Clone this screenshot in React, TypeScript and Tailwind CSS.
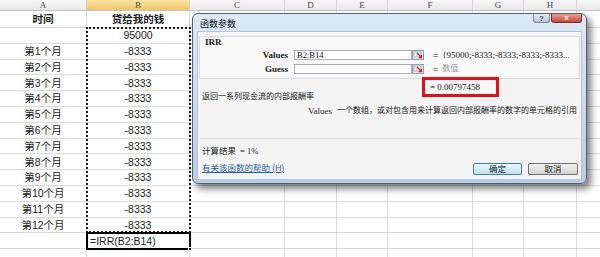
import React from "react";

const cols = [
  { l: "A", w: "w-[87px]", hd: "bg-gradient-to-b from-[#f7f7f7] to-[#e9e9e9]" },
  { l: "B", w: "w-[103px]", hd: "bg-gradient-to-b from-[#fbe3a3] to-[#f3c663]" },
  { l: "C", w: "w-[95px]", hd: "bg-gradient-to-b from-[#f7f7f7] to-[#e9e9e9]" },
  { l: "D", w: "w-[52px]", hd: "bg-gradient-to-b from-[#f7f7f7] to-[#e9e9e9]" },
  { l: "E", w: "w-[51px]", hd: "bg-gradient-to-b from-[#f7f7f7] to-[#e9e9e9]" },
  { l: "F", w: "w-[85px]", hd: "bg-gradient-to-b from-[#f7f7f7] to-[#e9e9e9]" },
  { l: "G", w: "w-[51px]", hd: "bg-gradient-to-b from-[#f7f7f7] to-[#e9e9e9]" },
  { l: "H", w: "w-[53px]", hd: "bg-gradient-to-b from-[#f7f7f7] to-[#e9e9e9]" },
  { l: "", w: "w-[60px]", hd: "bg-gradient-to-b from-[#f7f7f7] to-[#e9e9e9]" },
];

type Row = { a: string; b: string; kind?: "head" | "formula"; h: string };

const rows: Row[] = [
  { a: "时间", b: "贷给我的钱", kind: "head", h: "h-[17px]" },
  { a: "", b: "95000", h: "h-[15.8px]" },
  ...Array.from({ length: 12 }, (_, i) => ({ a: `第${i + 1}个月`, b: "-8333", h: "h-[15.8px]" })),
  { a: "", b: "=IRR(B2:B14)", kind: "formula", h: "h-[15.8px]" },
  { a: "", b: "", h: "h-[15.8px]" },
];

const serif = { fontFamily: '"Liberation Serif", "Noto Sans CJK SC", serif' };

function RefIcon() {
  return (
    <svg width="12" height="10" viewBox="0 0 12 10" className="block shrink-0">
      <rect x="0.5" y="0.5" width="11" height="9" fill="#dfe7f1" stroke="#8d9db3" />
      <rect x="2" y="2" width="7" height="5" fill="#ffffff" stroke="#7c8ea6" strokeWidth="0.6" />
      <line x1="2" y1="4" x2="9" y2="4" stroke="#9aaabb" strokeWidth="0.5" />
      <line x1="5" y1="2" x2="5" y2="7" stroke="#9aaabb" strokeWidth="0.5" />
      <path d="M5 3 L9.5 7.5 M9.5 5 L9.5 7.5 L7 7.5" stroke="#d42020" strokeWidth="1.3" fill="none" />
    </svg>
  );
}

export default function App() {
  return (
    <div
      className="relative w-[600px] h-[257px] overflow-hidden bg-white"
      style={{ fontFamily: '"Liberation Sans", "Noto Sans CJK SC", sans-serif' }}
    >
      {/* column headers */}
      <div className="flex h-[11px] border-b border-[#c2c2c2]">
        {cols.map((c, i) => (
          <div
            key={i}
            className={`${c.w} ${c.hd} shrink-0 border-r border-[#d2d2d2] flex items-center justify-center text-[9px] leading-[10px] text-[#4a4a4a]`}
            style={serif}
          >
            {c.l}
          </div>
        ))}
      </div>

      {/* grid rows */}
      <div className="flex flex-col">
        {rows.map((r, i) => (
          <div key={i} className={`flex ${r.h}`}>
            {cols.map((c, j) => {
              let content: React.ReactNode = null;
              let cls = "justify-center";
              if (j === 0) content = r.a;
              if (j === 1) {
                content = r.b;
                if (r.kind === "formula") cls = "justify-start pl-[3px]";
              }
              return (
                <div
                  key={j}
                  className={`${c.w} shrink-0 border-r border-b border-[#dadada] flex items-center ${cls} whitespace-nowrap text-[10.5px] leading-none text-[#1c1c1c] ${
                    r.kind === "head" ? "font-bold" : ""
                  }`}
                >
                  {content}
                </div>
              );
            })}
          </div>
        ))}
      </div>

      {/* copy marquee */}
      <div className="absolute left-[86px] top-[27px] w-[105px] h-[206px] border-2 border-dotted border-[#1a1a1a]" />
      {/* active cell */}
      <div className="absolute left-[86px] top-[232px] w-[105px] h-[18px] border-2 border-black">
        <div className="absolute -right-[3px] -bottom-[3px] w-[4px] h-[4px] bg-black border border-white" />
      </div>

      {/* dialog */}
      <div className="absolute left-[192px] top-[13px] w-[395px] h-[171px] rounded-[6px] border border-[#56616f] bg-gradient-to-b from-[#dce9f6] via-[#c9dcf0] to-[#b7cde6] shadow-[4px_5px_7px_rgba(0,0,0,0.5)] flex flex-col px-[4px] pb-[3px]">
        <div className="flex h-[17px] shrink-0 items-start justify-between">
          <span className="mt-[5px] ml-[3px] text-[9px] leading-[10px] text-[#111]">函数参数</span>
          <div className="flex gap-[1px]">
            <div className="w-[17px] h-[9px] rounded-b-[3px] border border-t-0 border-[#7b8799] bg-gradient-to-b from-[#e9eef5] to-[#b9c6d6] flex items-center justify-center text-[7px] leading-none text-[#444] font-bold">
              ?
            </div>
            <div className="w-[31px] h-[9px] rounded-b-[3px] border border-t-0 border-[#7a2f2a] bg-gradient-to-b from-[#e5a195] to-[#c7453a] flex items-center justify-center text-[8px] leading-none text-white font-bold">
              x
            </div>
          </div>
        </div>

        <div className="flex-1 bg-[#f4f4f4] border border-[#b5c5d8] flex flex-col">
          {/* group box */}
          <div className="mt-[4px] mx-[1px] h-[43px] border border-[#d5dbe1] bg-[#f8f8f8] flex flex-col">
            <div className="pl-[5px] text-[9px] leading-[10px] text-[#222] font-bold" style={serif}>
              IRR
            </div>
            <div className="mt-[3px] flex items-center h-[10px] whitespace-nowrap">
              <div className="w-[88px] text-right text-[9px] leading-[10px] text-[#222] font-bold" style={serif}>
                Values
              </div>
              <div
                className="ml-[6px] w-[118px] h-[10px] bg-white border border-[#abadb3] pl-[2px] text-[8.5px] leading-[8px] text-[#111]"
                style={serif}
              >
                B2:B14
              </div>
              <RefIcon />
              <span className="ml-[9px] text-[9px] leading-[10px] text-[#222]">=</span>
              <span className="ml-[4px] text-[9px] leading-[10px] text-[#222]" style={serif}>
                {"{95000;-8333;-8333;-8333;-8333..."}
              </span>
            </div>
            <div className="mt-[4px] flex items-center h-[10px] whitespace-nowrap">
              <div className="w-[88px] text-right text-[9px] leading-[10px] text-[#222] font-bold" style={serif}>
                Guess
              </div>
              <div className="ml-[6px] w-[118px] h-[10px] bg-white border border-[#abadb3]" />
              <RefIcon />
              <span className="ml-[9px] text-[9px] leading-[10px] text-[#222]">=</span>
              <span className="ml-[4px] text-[8px] leading-[10px] text-[#9a9a9a]">数值</span>
            </div>
          </div>

          <div className="mt-[12px] pl-[4px] whitespace-nowrap text-[8px] leading-[12px] text-[#222]">
            返回一系列现金流的内部报酬率
          </div>
          <div className="mt-[2px] pl-[110px] flex items-center h-[12px] whitespace-nowrap">
            <span className="text-[9px] leading-[12px] text-[#222]" style={serif}>
              Values
            </span>
            <span className="ml-[5px] text-[8px] leading-[12px] text-[#222]">
              一个数组，或对包含用来计算返回内部报酬率的数字的单元格的引用
            </span>
          </div>

          <div className="mt-[21px] mx-[2px] h-px bg-[#dedede]" />

          <div className="mt-[6px] pl-[4px] h-[12px] flex items-center whitespace-nowrap text-[8.5px] leading-[12px] text-[#222]">
            <span>计算结果</span>
            <span className="ml-[4px]" style={serif}>
              = 1%
            </span>
          </div>

          <div className="mt-[6px] pl-[4px] pr-[3px] h-[12px] flex items-start justify-between whitespace-nowrap">
            <span className="text-[8.5px] leading-[11px] text-[#1f5fae] underline">有关该函数的帮助 (H)</span>
            <div className="flex gap-[6px]">
              <div className="w-[49px] h-[12px] rounded-[2px] border border-[#3c7fb1] bg-gradient-to-b from-[#eaf6fd] to-[#bfe0f4] flex items-center justify-center text-[8.5px] leading-none text-[#222]">
                确定
              </div>
              <div className="w-[50px] h-[12px] rounded-[2px] border border-[#707070] bg-gradient-to-b from-[#f2f2f2] to-[#d2d2d2] flex items-center justify-center text-[8.5px] leading-none text-[#222]">
                取消
              </div>
            </div>
          </div>
        </div>

        {/* red highlight */}
        <div
          className="absolute left-[229px] top-[63px] w-[77px] h-[20px] border-[3px] border-[#e3101a] bg-[#f7f7f7] pl-[5px] flex items-center whitespace-nowrap text-[9px] leading-none text-[#222]"
          style={serif}
        >
          = 0.00797458
        </div>
      </div>
    </div>
  );
}
